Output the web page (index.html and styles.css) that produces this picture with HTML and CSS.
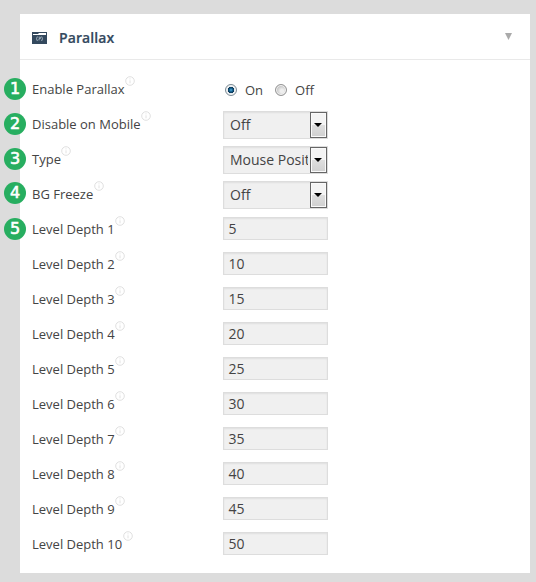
FILE: index.html
```html
<!DOCTYPE html>
<html lang="en">
<head>
<meta charset="utf-8">
<title>Parallax</title>
<link rel="stylesheet" href="styles.css">
</head>
<body>
<svg class="defs" width="0" height="0">
  <symbol id="info" viewBox="0 0 10 10"><circle cx="5" cy="5" r="4.3" fill="none" stroke="#e0e0e0"/><path d="M5 4.3v3M5 2.4v1" stroke="#e2e2e2"/></symbol>
</svg>
<main class="panel">
  <header class="head">
    <svg class="icon" width="15" height="12" viewBox="0 0 15 12"><path fill="#34495e" d="M0 0h15v12H0z"/><path fill="#fff" d="M1 2h5l1-1h7v2H1z"/><path fill="none" stroke="#aebdca" stroke-width=".9" d="M5.4 4.5Q3.6 6.7 5.4 9M9.6 4.5Q11.4 6.7 9.6 9M6.6 5.2h1.8v1.4H7v1.8"/></svg>
    <h1 class="title">Parallax</h1>
    <svg class="toggle" width="7" height="7" viewBox="0 0 7 7"><path fill="#aaa" d="M0 0h7L3.5 7z"/></svg>
  </header>
  <div class="rows">
    <div class="row"><span class="badge">1</span><div class="label">Enable Parallax<svg class="info"><use href="#info"/></svg></div>
      <div class="radios"><span class="radio on"></span><span class="opt">On</span><span class="radio"></span><span class="opt">Off</span></div></div>
    <div class="row"><span class="badge">2</span><div class="label">Disable on Mobile<svg class="info"><use href="#info"/></svg></div><div class="select"><span class="value">Off</span><span class="arrow"></span></div></div>
    <div class="row"><span class="badge">3</span><div class="label">Type<svg class="info"><use href="#info"/></svg></div><div class="select"><span class="value">Mouse Position</span><span class="arrow"></span></div></div>
    <div class="row"><span class="badge raised">4</span><div class="label">BG Freeze<svg class="info"><use href="#info"/></svg></div><div class="select"><span class="value">Off</span><span class="arrow"></span></div></div>
    <div class="row"><span class="badge">5</span><div class="label">Level Depth 1<svg class="info"><use href="#info"/></svg></div><div class="field">5</div></div>
    <div class="row"><div class="label">Level Depth 2<svg class="info"><use href="#info"/></svg></div><div class="field">10</div></div>
    <div class="row"><div class="label">Level Depth 3<svg class="info"><use href="#info"/></svg></div><div class="field">15</div></div>
    <div class="row"><div class="label">Level Depth 4<svg class="info"><use href="#info"/></svg></div><div class="field">20</div></div>
    <div class="row"><div class="label">Level Depth 5<svg class="info"><use href="#info"/></svg></div><div class="field">25</div></div>
    <div class="row"><div class="label">Level Depth 6<svg class="info"><use href="#info"/></svg></div><div class="field">30</div></div>
    <div class="row"><div class="label">Level Depth 7<svg class="info"><use href="#info"/></svg></div><div class="field">35</div></div>
    <div class="row"><div class="label">Level Depth 8<svg class="info"><use href="#info"/></svg></div><div class="field">40</div></div>
    <div class="row"><div class="label">Level Depth 9<svg class="info"><use href="#info"/></svg></div><div class="field">45</div></div>
    <div class="row"><div class="label">Level Depth 10<svg class="info"><use href="#info"/></svg></div><div class="field">50</div></div>
  </div>
</main>
</body>
</html>
```
FILE: styles.css
```css
* { box-sizing: border-box; }
body { margin: 0; padding: 14px 6px 9px 20px; height: 582px; overflow: hidden; background: #dcdcdc; font: 13px/18px "Open Sans", sans-serif; color: #444; }
.defs { position: absolute; }
.panel { height: 559px; background: #fff; }
.head { display: flex; align-items: center; height: 46px; padding: 0 18px 0 12px; border-bottom: 1px solid #e9e9e9; }
.icon { margin-top: 2px; }
.title { flex: 1; margin: 2px 0 0 12px; font-size: 14px; line-height: 20px; font-weight: 600; letter-spacing: .1px; color: #34495e; -webkit-text-stroke: .2px #34495e; }
.rows { padding: 11px 12px 0; }
.row { position: relative; display: flex; align-items: flex-start; height: 35px; }
.badge { position: absolute; left: -28px; top: 7px; width: 22px; height: 22px; border-radius: 50%; background: #27ae60; color: #fff; font: 16px/21px "DejaVu Sans", sans-serif; -webkit-text-stroke: .6px #fff; text-align: center; }
.badge.raised { top: 6px; }
.label { width: 191px; padding-top: 9px; display: flex; align-items: flex-start; white-space: nowrap; }
.info { width: 10px; height: 10px; margin: -4px 0 0 .5px; }
.radios { display: flex; align-items: center; padding: 10px 0 0 2px; }
.radio { width: 12px; height: 12px; border: 1px solid #949494; border-radius: 50%; background: radial-gradient(circle at 60% 60%, #eee 20%, #c7c7c7 60%); box-shadow: inset 0 0 0 1px #f5f5f5; }
.radio.on { border-color: #7c8b95; background: radial-gradient(circle at 50% 50%, #5fb4e0 0, #176a9b 20%, #0b3453 42%, #e5eaed 50%); }
.opt { margin: 0 12px 0 8px; }
.select, .field { border: 1px solid #ddd; background: #f0f0f0; box-shadow: inset 0 1px 2px rgba(0,0,0,.07); font-size: 14px; color: #444; }
.select { display: flex; width: 105px; height: 28px; margin-top: 5px; padding-left: 6px; }
.value { flex: 1; min-width: 0; overflow: hidden; white-space: nowrap; line-height: 26px; }
.arrow { display: flex; align-items: center; justify-content: center; width: 17px; height: 26px; margin-left: 2px; padding-right: 1px; border: 1px solid #666; background: linear-gradient(#f4f4f4 48%, #dedede 52%, #d0d0d0); box-shadow: inset 0 0 0 1px #fafafa; }
.arrow::after { content: ""; border: solid transparent; border-width: 4px 4px 0; border-top-color: #000; }
.field { width: 105px; height: 23px; margin-top: 6px; padding-left: 4.5px; line-height: 22px; }
```
